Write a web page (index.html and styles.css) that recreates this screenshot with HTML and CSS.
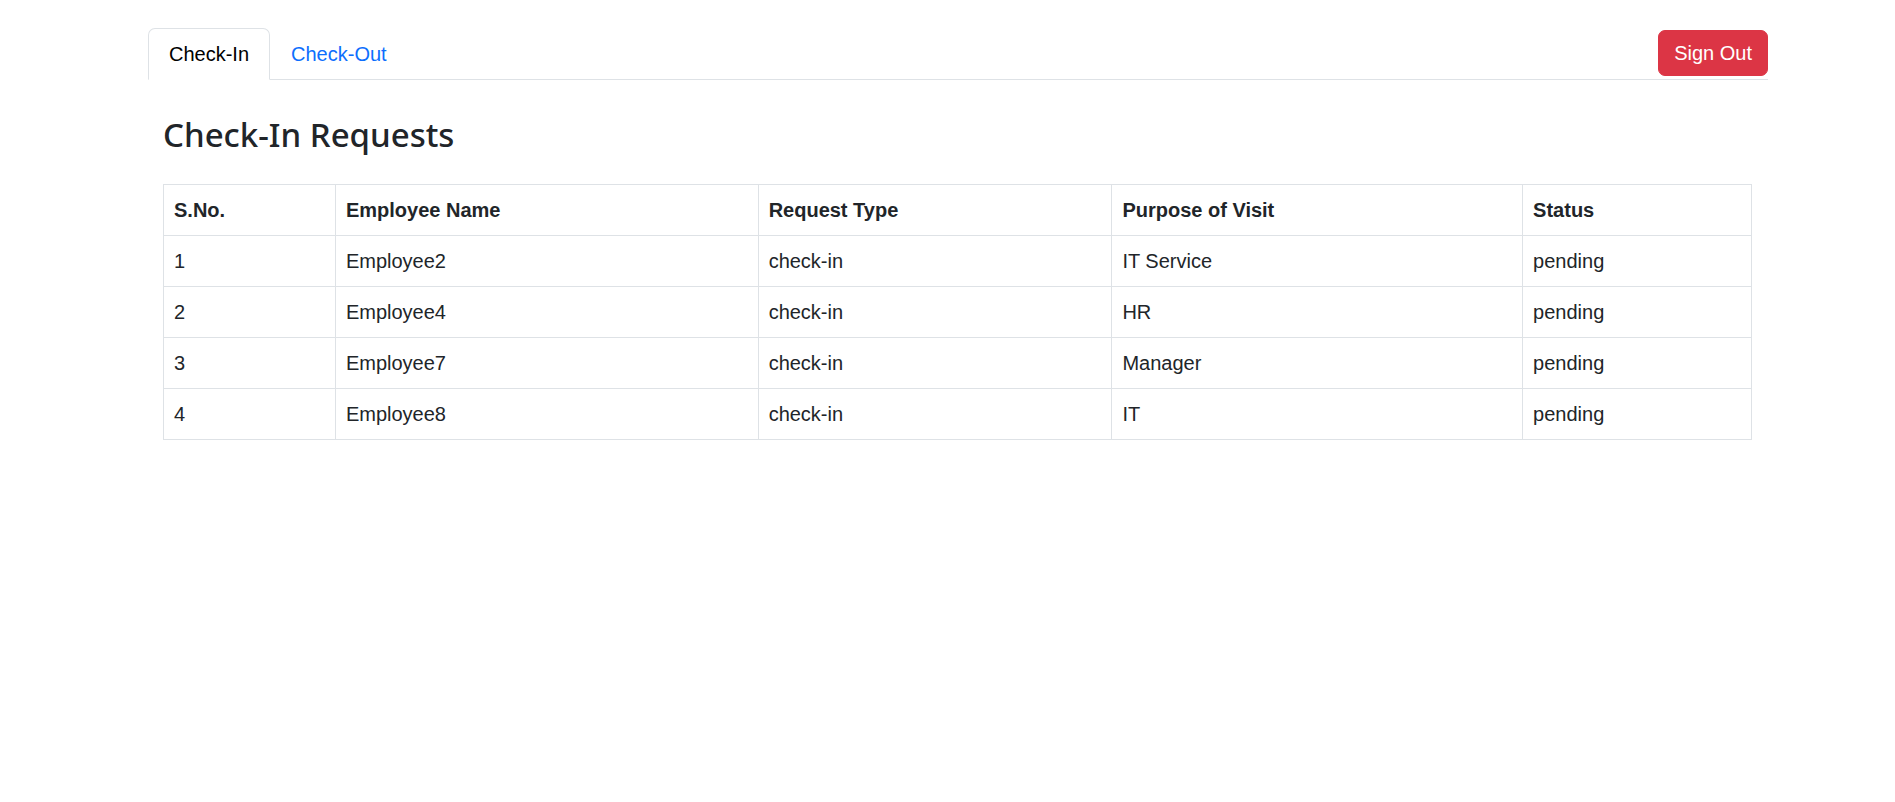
FILE: index.html
```html
<!DOCTYPE html>
<html lang="en">
<head>
<meta charset="utf-8">
<title>Check-In Requests</title>
<link rel="stylesheet" href="styles.css">
</head>
<body>
<div class="page">
  <ul class="tabs">
    <li class="tab active">Check-In</li>
    <li class="tab">Check-Out</li>
    <li class="spacer"></li>
    <li class="signout-wrap"><button class="signout">Sign Out</button></li>
  </ul>
  <div class="content">
    <h2 class="title">Check-In Requests</h2>
    <table class="requests">
      <colgroup>
        <col class="c1"><col class="c2"><col class="c3"><col class="c4"><col class="c5">
      </colgroup>
      <thead>
        <tr><th>S.No.</th><th>Employee Name</th><th>Request Type</th><th>Purpose of Visit</th><th>Status</th></tr>
      </thead>
      <tbody>
        <tr><td>1</td><td>Employee2</td><td>check-in</td><td>IT Service</td><td>pending</td></tr>
        <tr><td>2</td><td>Employee4</td><td>check-in</td><td>HR</td><td>pending</td></tr>
        <tr><td>3</td><td>Employee7</td><td>check-in</td><td>Manager</td><td>pending</td></tr>
        <tr><td>4</td><td>Employee8</td><td>check-in</td><td>IT</td><td>pending</td></tr>
      </tbody>
    </table>
  </div>
</div>
</body>
</html>
```

FILE: styles.css
```css
html, body {
  margin: 0;
  padding: 0;
  background: #fff;
}
body {
  font-family: "Liberation Sans", Arial, sans-serif;
  font-size: 20px;
  line-height: 30px;
  color: #212529;
}
.page {
  width: 1620px;
  margin-left: 148px;
  padding-top: 28px;
}
.tabs {
  list-style: none;
  margin: 0;
  padding: 0;
  display: flex;
  border-bottom: 1px solid #dee2e6;
}
.tab {
  padding: 10px 20px;
  border: 1px solid transparent;
  border-top-left-radius: 7px;
  border-top-right-radius: 7px;
  margin-bottom: -1px;
  color: #0d6efd;
  cursor: pointer;
}
.tab.active {
  color: #000;
  background: #fff;
  border-color: #dee2e6 #dee2e6 #fff;
}
.spacer {
  flex: 1;
}
.signout-wrap {
  display: flex;
  align-items: flex-start;
  padding-top: 2px;
}
.signout {
  font-family: inherit;
  font-size: 20px;
  line-height: 30px;
  color: #fff;
  background: #dc3545;
  border: 1px solid #dc3545;
  border-radius: 7px;
  padding: 7px 15px;
  cursor: pointer;
}
.content {
  padding: 0 15px;
}
.title {
  margin: 34px 0 29px;
  font-family: "Noto Sans", "Liberation Sans", sans-serif;
  font-size: 33px;
  line-height: 41px;
  font-weight: 500;
  color: #212529;
}
.requests {
  width: 1589px;
  border-collapse: collapse;
  border: 1px solid #dee2e6;
}
.requests th,
.requests td {
  border: 1px solid #dee2e6;
  padding: 10px 10px;
  text-align: left;
  vertical-align: top;
}
.requests th {
  font-weight: 700;
}
.c1 { width: 172px; }
.c2 { width: 423px; }
.c3 { width: 354px; }
.c4 { width: 411px; }
.c5 { width: 229px; }
```
